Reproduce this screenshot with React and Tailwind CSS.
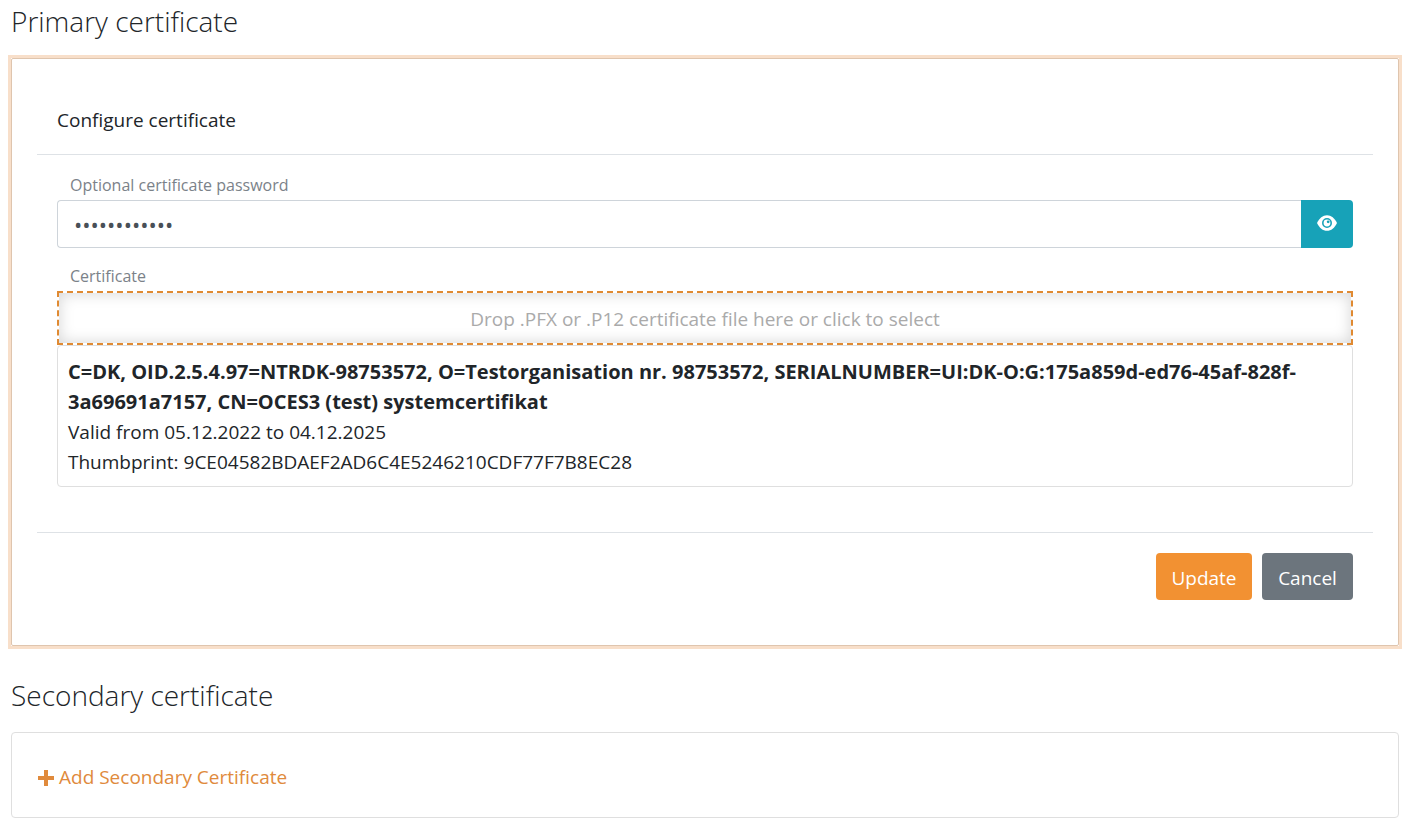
import React, { useState } from 'react';

const CERTIFICATE = {
  subject:
    'C=DK, OID.2.5.4.97=NTRDK-98753572, O=Testorganisation nr. 98753572, SERIALNUMBER=UI:DK-O:G:175a859d-ed76-45af-828f-3a69691a7157, CN=OCES3 (test) systemcertifikat',
  validFrom: '05.12.2022',
  validTo: '04.12.2025',
  thumbprint: '9CE04582BDAEF2AD6C4E5246210CDF77F7B8EC28',
};

// --- Icons ---
const EyeIcon = () => (
  <svg viewBox="0 0 20 16" className="w-5 h-4" aria-hidden="true">
    <path d="M0 8C2.4 3 5.8 .2 10 .2S17.6 3 20 8c-2.4 5-5.8 7.8-10 7.8S2.4 13 0 8z" fill="currentColor" />
    <circle cx="10" cy="8" r="4.2" fill="none" stroke="#17a2b8" strokeWidth="1.6" />
    <circle cx="11.2" cy="6.8" r="1.4" fill="#17a2b8" />
  </svg>
);

const PlusIcon = () => (
  <svg viewBox="0 0 8 8" className="mt-0.5 w-4 h-4" fill="currentColor" aria-hidden="true">
    <path d="M3 0v3h-3v2h3v3h2v-3h3v-2h-3v-3h-2z" />
  </svg>
);

const SectionTitle = ({ children }) => (
  <h2 className="text-[28px] leading-9 font-light">{children}</h2>
);

// --- Certificate form ---
const CertificateForm = () => {
  const [password, setPassword] = useState('certpassword');
  const [showPassword, setShowPassword] = useState(false);

  return (
    <form
      onSubmit={(e) => e.preventDefault()}
      className="rounded-[2px] border border-[#dfc5ae] bg-white p-[25px]"
    >
      <h3 className="border-b border-[#dee2e6] px-5 pt-[21px] pb-[19px] text-[19px] leading-[30px]">Configure certificate</h3>

      <div className="px-5 pt-5 pb-[45px]">
        <label htmlFor="password" className="block mb-[5px] px-[13px] text-base leading-5 text-[#7b8289]">
          Optional certificate password
        </label>
        <div className="flex h-12">
          <input
            id="password"
            type={showPassword ? 'text' : 'password'}
            value={password}
            onChange={(e) => setPassword(e.target.value)}
            className="min-w-0 flex-1 rounded-l border border-r-0 border-[#ced4da] px-4 text-[22px] text-[#495057] outline-none"
          />
          <button
            type="button"
            onClick={() => setShowPassword(!showPassword)}
            aria-label="Show password"
            className="flex w-[52px] items-center justify-center rounded-r bg-[#17a2b8] pb-0.5 text-white"
          >
            <EyeIcon />
          </button>
        </div>

        <label htmlFor="certificate" className="block mt-[18px] mb-[5px] px-[13px] text-base leading-5 text-[#7b8289]">
          Certificate
        </label>
        <label
          htmlFor="certificate"
          className="flex h-[54px] cursor-pointer items-center justify-center border-2 border-dashed border-[#e08a32] pt-0.5 text-[19px] text-[#aaaaaa] shadow-[inset_0_0_15px_#d4d4d4]"
        >
          Drop .PFX or .P12 certificate file here or click to select
          <input id="certificate" type="file" accept=".pfx,.p12" className="sr-only" />
        </label>

        <div className="rounded border border-[#dfdfdf] px-[10px] pt-[11px] pb-[9px] text-[19px] leading-[30px]">
          <p className="text-[20px] leading-[30px] font-bold">{CERTIFICATE.subject}</p>
          <p>Valid from {CERTIFICATE.validFrom} to {CERTIFICATE.validTo}</p>
          <p>Thumbprint: {CERTIFICATE.thumbprint}</p>
        </div>
      </div>

      <div className="flex justify-end gap-[10px] border-t border-[#dee2e6] p-5 text-[19px] text-white">
        <button type="submit" className="h-[47px] w-24 rounded bg-[#f29132] pt-1">Update</button>
        <button type="button" className="h-[47px] w-[91px] rounded bg-[#6c757d] pt-1">Cancel</button>
      </div>
    </form>
  );
};

const App = () => {
  return (
    <main className="px-2 pt-[3px] pb-3 font-['Open_Sans',sans-serif] text-[#212529]">
      <div className="px-[3px]">
        <SectionTitle>Primary certificate</SectionTitle>
      </div>
      <section className="mt-4 mr-[2px] border-3 border-[#f8dfca]">
        <CertificateForm />
      </section>

      <div className="mt-7 px-[3px]">
        <SectionTitle>Secondary certificate</SectionTitle>
        <section className="mt-[19px] mr-[2px] rounded border border-[#dfdfdf] px-[26px] pt-[29px] pb-[25px]">
          <a href="#add" className="flex w-fit items-center gap-[5px] text-[19px] leading-[30px] text-[#e08a3c]">
            <PlusIcon />
            Add Secondary Certificate
          </a>
        </section>
      </div>
    </main>
  );
};

export default App;
